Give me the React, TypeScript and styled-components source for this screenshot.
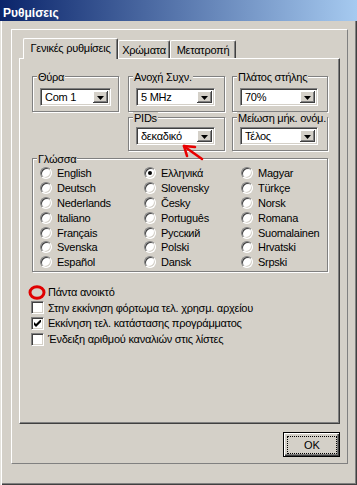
import React from "react";
import styled, { createGlobalStyle } from "styled-components";

const Global = createGlobalStyle`
  html, body { margin: 0; padding: 0; background: #d4d0c8; }
  body {
    font-family: "Liberation Sans", Arial, sans-serif;
    font-size: 11px;
    letter-spacing: -0.25px;
    color: #000;
  }
  * { box-sizing: border-box; }
`;

const Window = styled.div`
  position: relative;
  width: 357px;
  height: 485px;
  background: #d4d0c8;
  box-shadow: inset 1px 0 #e4e2dc, inset 2px 0 #fff, inset -1px -1px #404040,
    inset -2px -2px #808080;
  display: flex;
  flex-direction: column;
  overflow: hidden;
`;

const TitleBar = styled.div`
  flex: none;
  height: 21px;
  background: linear-gradient(to right, #0a246a, #a6caf0);
  color: #fff;
  font-weight: bold;
  font-size: 12px;
  letter-spacing: 0;
  display: flex;
  align-items: center;
  padding: 4px 0 0 3px;
`;

const Frame = styled.div`
  margin: 8px 0 0 11px;
  width: 337px;
  height: 435px;
  border-top: 1px solid #fff;
  border-left: 1px solid #fff;
  border-right: 1px solid #808080;
  border-bottom: 1px solid #808080;
  padding: 8px 7px 0 7px;
  display: flex;
  flex-direction: column;
`;

const TabStrip = styled.div`
  height: 20px;
  display: flex;
  align-items: flex-end;
  padding-left: 4px;
`;

const Tab = styled.div<{ $active?: boolean; $w: number }>`
  position: relative;
  z-index: ${(p) => (p.$active ? 1 : 0)};
  width: ${(p) => p.$w}px;
  height: ${(p) => (p.$active ? 21 : 18)}px;
  margin-bottom: ${(p) => (p.$active ? -1 : 0)}px;
  background: #d4d0c8;
  border-top: 1px solid #fff;
  border-left: 1px solid #fff;
  border-right: 1px solid #404040;
  border-top-left-radius: 2px;
  border-top-right-radius: 2px;
  box-shadow: inset -1px 0 #808080;
  display: flex;
  align-items: center;
  justify-content: center;
  padding-bottom: ${(p) => (p.$active ? 2 : 0)}px;
  white-space: nowrap;
`;

const Page = styled.div`
  width: 321px;
  height: 366px;
  border-top: 1px solid #fff;
  border-left: 1px solid #fff;
  border-right: 1px solid #404040;
  border-bottom: 1px solid #404040;
  box-shadow: inset -1px -1px #808080;
  padding: 17px 12px 0 12px;
  display: flex;
  flex-direction: column;
`;

const Row = styled.div<{ $mt?: number }>`
  display: flex;
  margin-top: ${(p) => p.$mt ?? 0}px;
`;

const Group = styled.div<{ $w: number; $h: number; $ml?: number; $pt?: number }>`
  position: relative;
  flex: none;
  width: ${(p) => p.$w}px;
  height: ${(p) => p.$h}px;
  margin-left: ${(p) => p.$ml ?? 0}px;
  border: 1px solid #808080;
  box-shadow: inset 1px 1px #fff, 1px 1px #fff;
  padding: ${(p) => p.$pt ?? 11}px 0 0 7px;
`;

const GroupLabel = styled.span`
  position: absolute;
  top: -6px;
  left: 4px;
  padding: 0 1px;
  line-height: 12px;
  background: #d4d0c8;
  white-space: nowrap;
`;

const Combo = styled.div<{ $w: number }>`
  width: ${(p) => p.$w}px;
  height: 18px;
  background: #fff;
  border: 1px solid;
  border-color: #808080 #fff #fff #808080;
  box-shadow: inset 1px 1px #404040, inset -1px -1px #d4d0c8;
  display: flex;
  align-items: center;
  padding: 2px;
`;

const ComboText = styled.span`
  flex: 1;
  padding-left: 2px;
  white-space: nowrap;
  overflow: hidden;
`;

const DropButton = styled.div`
  flex: none;
  width: 15px;
  height: 100%;
  background: #d4d0c8;
  box-shadow: inset -1px -1px #404040, inset 1px 1px #fff, inset -2px -2px #808080;
  display: flex;
  align-items: center;
  justify-content: center;
  padding-top: 1px;
`;

const RadioGrid = styled.div`
  display: grid;
  grid-template-columns: 104px 97px 1fr;
  grid-template-rows: repeat(7, 14.8px);
  grid-auto-flow: column;
`;

const RadioItem = styled.label`
  display: flex;
  align-items: center;
  gap: 5px;
  white-space: nowrap;
`;

const Radio = styled.span<{ $on?: boolean }>`
  position: relative;
  flex: none;
  width: 12px;
  height: 12px;
  border-radius: 50%;
  background: #fff;
  border: 1px solid;
  border-color: #808080 #fff #fff #808080;
  box-shadow: inset 1px 1px #404040, inset -1px -1px #d4d0c8;
  &::after {
    content: "";
    display: ${(p) => (p.$on ? "block" : "none")};
    position: absolute;
    left: 3px;
    top: 3px;
    width: 4px;
    height: 4px;
    border-radius: 50%;
    background: #000;
  }
`;

const CheckList = styled.div`
  display: flex;
  flex-direction: column;
  margin-top: 12.5px;
  margin-left: -1px;
`;

const CheckRow = styled.label`
  height: 15.6px;
  display: flex;
  align-items: center;
  gap: 4px;
  white-space: nowrap;
`;

const CheckBox = styled.span`
  flex: none;
  width: 13px;
  height: 13px;
  background: #fff;
  border: 1px solid;
  border-color: #808080 #fff #fff #808080;
  box-shadow: inset 1px 1px #404040, inset -1px -1px #d4d0c8;
  display: flex;
  align-items: center;
  justify-content: center;
`;

const MarkCircle = styled.svg`
  flex: none;
  margin: 0 -2px 0 -3px;
`;

const ButtonRow = styled.div`
  display: flex;
  justify-content: flex-end;
  margin-top: 8px;
`;

const OkButton = styled.div`
  width: 57px;
  height: 25px;
  border: 1px solid #000;
  background: #d4d0c8;
  box-shadow: inset 1px 1px #fff, inset -1px -1px #404040, inset -2px -2px #808080;
  padding: 3px 2px 2px 3px;
  display: flex;
`;

const FocusRect = styled.span`
  flex: 1;
  border: 1px dotted #000;
  display: flex;
  align-items: center;
  justify-content: center;
  letter-spacing: 0;
`;

const ArrowMark = styled.svg`
  position: absolute;
  left: 176px;
  top: 140px;
`;

const Arrow = () => (
  <svg width="7" height="4" viewBox="0 0 7 4">
    <polygon points="0,0 7,0 3.5,4" fill="#000" />
  </svg>
);

const ComboBox = ({ w, value }: { w: number; value: string }) => (
  <Combo $w={w}>
    <ComboText>{value}</ComboText>
    <DropButton>
      <Arrow />
    </DropButton>
  </Combo>
);

const Tick = () => (
  <svg width="7" height="7" viewBox="0 0 7 7">
    <polygon points="0,2 2,4 7,-1 7,2 2,7 0,5" fill="#000" />
  </svg>
);

const languages: string[] = [
  "English", "Deutsch", "Nederlands", "Italiano", "Français", "Svenska", "Español",
  "Ελληνικά", "Slovensky", "Česky", "Português", "Русский", "Polski", "Dansk",
  "Magyar", "Türkçe", "Norsk", "Romana", "Suomalainen", "Hrvatski", "Srpski",
];

const options: { text: string; checked?: boolean; marked?: boolean }[] = [
  { text: "Πάντα ανοικτό", marked: true },
  { text: "Στην εκκίνηση φόρτωμα τελ. χρησμ. αρχείου" },
  { text: "Εκκίνηση τελ. κατάστασης προγράμματος", checked: true },
  { text: "Ένδειξη αριθμού καναλιών στις λίστες" },
];

export default function App() {
  return (
    <Window>
      <Global />
      <TitleBar>Ρυθμίσεις</TitleBar>
      <Frame>
        <TabStrip>
          <Tab $active $w={95}>Γενικές ρυθμίσεις</Tab>
          <Tab $w={52}>Χρώματα</Tab>
          <Tab $w={66}>Μετατροπή</Tab>
        </TabStrip>
        <Page>
          <Row>
            <Group $w={87} $h={36}>
              <GroupLabel>Θύρα</GroupLabel>
              <ComboBox w={71} value="Com 1" />
            </Group>
            <Group $w={97} $h={36} $ml={9}>
              <GroupLabel>Ανοχή Συχν.</GroupLabel>
              <ComboBox w={79} value="5 MHz" />
            </Group>
            <Group $w={96} $h={36} $ml={7}>
              <GroupLabel>Πλάτος στήλης</GroupLabel>
              <ComboBox w={78} value="70%" />
            </Group>
          </Row>
          <Row $mt={5}>
            <Group $w={97} $h={34} $ml={96} $pt={9}>
              <GroupLabel>PIDs</GroupLabel>
              <ComboBox w={79} value="δεκαδικό" />
            </Group>
            <Group $w={96} $h={34} $ml={7} $pt={9}>
              <GroupLabel>Μείωση μήκ. ονόμ.</GroupLabel>
              <ComboBox w={78} value="Τέλος" />
            </Group>
          </Row>
          <Row $mt={7}>
            <Group $w={296} $h={114} $pt={7}>
              <GroupLabel>Γλώσσα</GroupLabel>
              <RadioGrid>
                {languages.map((l) => (
                  <RadioItem key={l}>
                    <Radio $on={l === "Ελληνικά"} />
                    {l}
                  </RadioItem>
                ))}
              </RadioGrid>
            </Group>
          </Row>
          <CheckList>
            {options.map((o) => (
              <CheckRow key={o.text}>
                {o.marked ? (
                  <MarkCircle width="18" height="15" viewBox="0 0 18 15">
                    <ellipse cx="9" cy="7.5" rx="7" ry="5.8" fill="none" stroke="#e00000" strokeWidth="3" />
                  </MarkCircle>
                ) : (
                  <CheckBox>{o.checked && <Tick />}</CheckBox>
                )}
                {o.text}
              </CheckRow>
            ))}
          </CheckList>
        </Page>
        <ButtonRow>
          <OkButton>
            <FocusRect>OK</FocusRect>
          </OkButton>
        </ButtonRow>
      </Frame>
      <ArrowMark width="32" height="26" viewBox="0 0 32 26">
        <g stroke="#e80000" strokeWidth="2.6" strokeLinecap="round" fill="none">
          <line x1="9" y1="7" x2="26" y2="19" />
          <line x1="8" y1="6" x2="19" y2="7" />
          <line x1="8" y1="6" x2="11" y2="16" />
        </g>
      </ArrowMark>
    </Window>
  );
}
